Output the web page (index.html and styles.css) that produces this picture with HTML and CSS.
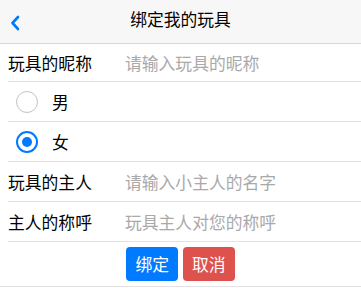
FILE: index.html
```html
<!DOCTYPE html>
<html lang="zh-CN">
<head>
    <meta charset="UTF-8">
    <meta name="viewport" content="width=device-width, initial-scale=1.0">
    <title>绑定我的玩具</title>
    <link rel="stylesheet" href="styles.css">
</head>
<body>
    <div class="nav">
        <a class="nav-back" href="#">
            <svg width="12" height="18" viewBox="0 0 12 18">
                <path d="M9 3 L3.5 9 L9 15" fill="none" stroke="#007aff" stroke-width="2.6" stroke-linecap="round" stroke-linejoin="round"/>
            </svg>
        </a>
        <div class="nav-title">绑定我的玩具</div>
        <div class="nav-side"></div>
    </div>

    <div class="form">
        <div class="row row-first">
            <div class="label">玩具的昵称</div>
            <input class="field" type="text" placeholder="请输入玩具的昵称">
        </div>
        <label class="row radio-row">
            <span class="radio"></span>
            <span class="radio-text">男</span>
        </label>
        <label class="row radio-row">
            <span class="radio checked"></span>
            <span class="radio-text">女</span>
        </label>
        <div class="row">
            <div class="label">玩具的主人</div>
            <input class="field" type="text" placeholder="请输入小主人的名字">
        </div>
        <div class="row">
            <div class="label">主人的称呼</div>
            <input class="field" type="text" placeholder="玩具主人对您的称呼">
        </div>
    </div>

    <div class="actions">
        <button class="btn btn-primary">绑定</button>
        <button class="btn btn-warn">取消</button>
    </div>
</body>
</html>
```

FILE: styles.css
```css
body {
    margin: 0;
    background-color: #fff;
    font-family: "Noto Sans CJK SC", "Liberation Sans", sans-serif;
    color: #000;
}

/* 顶部导航 */
.nav {
    height: 43px;
    background-color: #f7f7f7;
    border-bottom: 1px solid #d9d9d9;
    display: grid;
    grid-template-columns: 44px 1fr 44px;
    align-items: center;
}

.nav-back {
    display: flex;
    padding-left: 9px;
    padding-top: 3px;
}

.nav-title {
    text-align: center;
    font-size: 16.8px;
    padding-bottom: 5px;
}

/* 表单 */
.form {
    padding-left: 8px;
}

.row {
    height: 39px;
    border-bottom: 1px solid #e3e3e3;
    display: flex;
    align-items: center;
    font-size: 16.8px;
}

.row-first {
    height: 37px;
}

.label {
    width: 117px;
    flex-shrink: 0;
}

.field {
    flex: 1;
    min-width: 0;
    border: none;
    outline: none;
    padding: 0;
    font-family: inherit;
    font-size: 16.8px;
    color: #000;
    background: transparent;
}

.field::placeholder {
    color: #a9a9a9;
}

.radio-row {
    padding-left: 8px;
}

.radio {
    width: 20px;
    height: 20px;
    border: 1px solid #c3c3c3;
    border-radius: 50%;
    box-sizing: content-box;
    display: flex;
    justify-content: center;
    align-items: center;
}

.radio.checked {
    border: 2px solid #007aff;
    width: 18px;
    height: 18px;
}

.radio.checked::after {
    content: "";
    width: 10px;
    height: 10px;
    border-radius: 50%;
    background-color: #007aff;
}

.radio-text {
    margin-left: 14px;
}

/* 按钮 */
.actions {
    display: flex;
    justify-content: center;
    gap: 5px;
    padding: 5px 0 5px;
    border-bottom: 1px solid #e3e3e3;
}

.btn {
    height: 34px;
    padding: 0 9px;
    border: none;
    border-radius: 4px;
    color: #fff;
    font-family: inherit;
    font-size: 16.8px;
}

.btn-primary {
    background-color: #007aff;
}

.btn-warn {
    background-color: #dd524d;
}
```
